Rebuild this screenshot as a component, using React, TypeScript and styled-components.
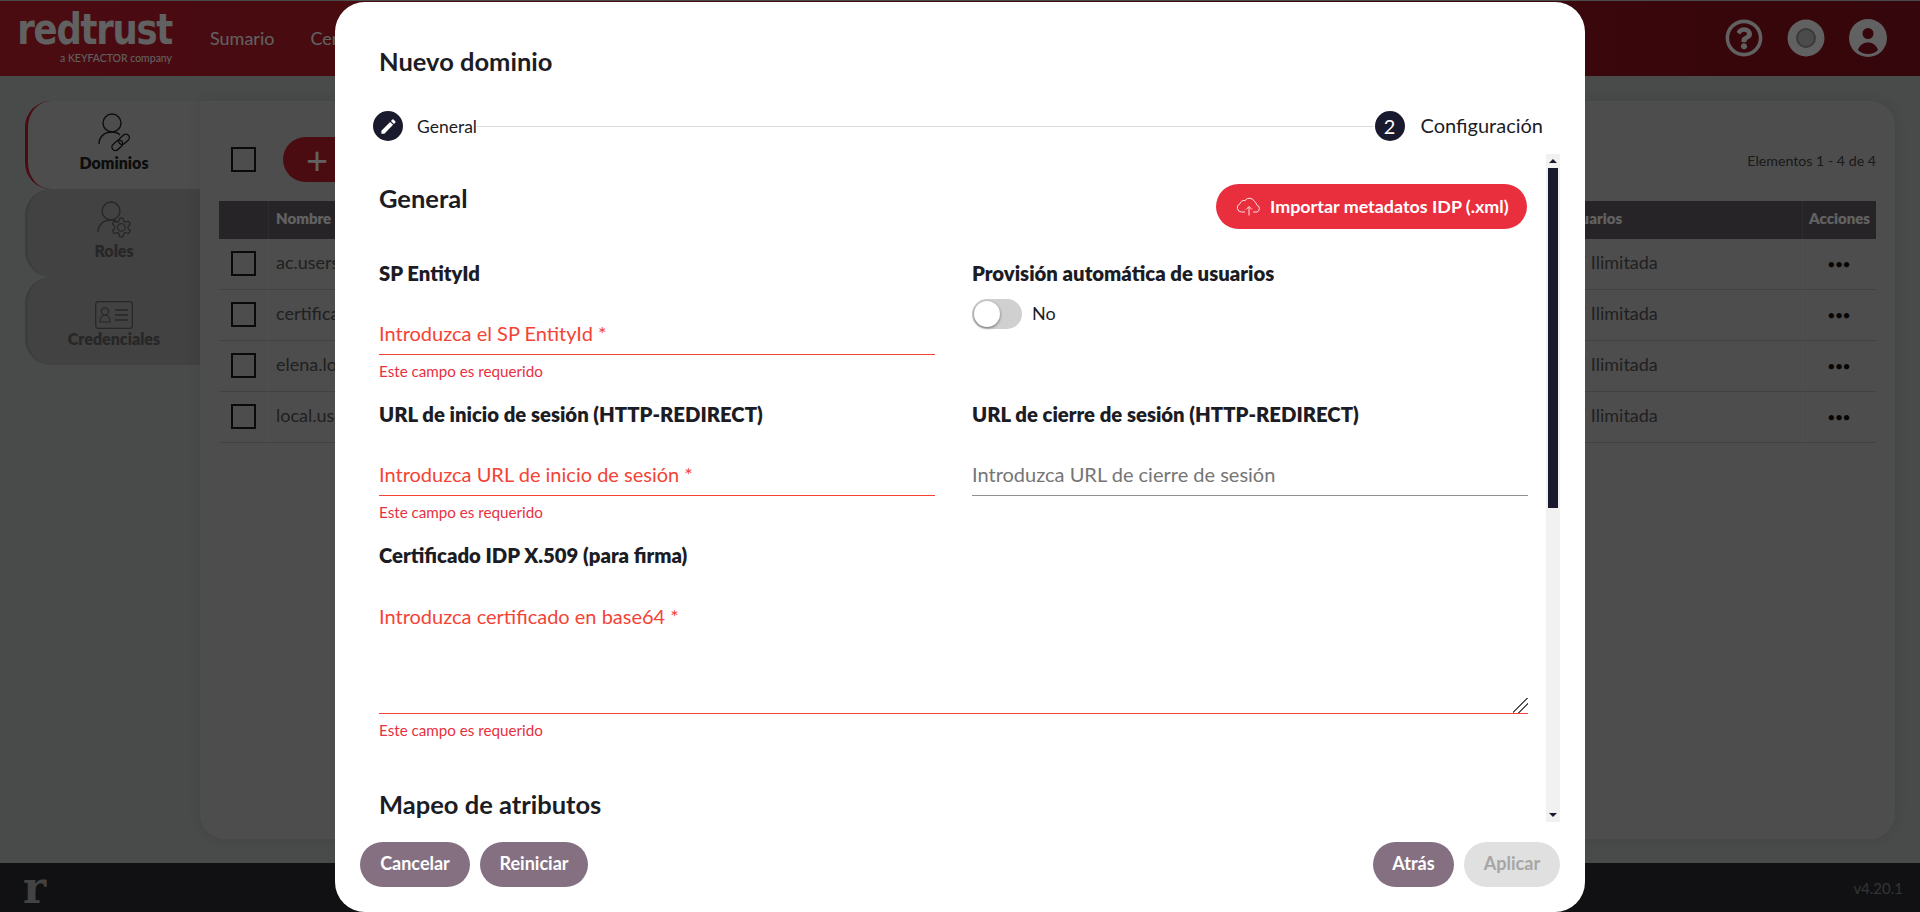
import { createGlobalStyle, styled } from "styled-components";
import { MdEdit } from "react-icons/md";
import { FaRegQuestionCircle } from "react-icons/fa";

const FONT = `Lato, "Open Sans", "Liberation Sans", sans-serif`;

const GlobalStyle = createGlobalStyle`
  html, body { margin: 0; padding: 0; height: 100%; overflow: hidden; }
  * { box-sizing: border-box; }
  body { font-family: ${FONT}; color: #1c1c24; }
`;

const Page = styled.div`
  width: 100vw;
  height: 100vh;
  padding-top: 1px;
  display: flex;
  flex-direction: column;
  background: #c0c4c4;
`;

const TopBar = styled.header`
  height: 75px;
  flex: none;
  display: flex;
  align-items: center;
  padding: 0 20px 2px;
  background: linear-gradient(90deg, #c4202f, #8c101d);
`;

const Logo = styled.div`
  width: 152px;
  display: flex;
  flex-direction: column;
  align-items: flex-end;
  color: #fff;
`;

const LogoWord = styled.span`
  font-family: "DejaVu Sans", sans-serif;
  font-weight: 700;
  font-size: 42px;
  line-height: 38px;
  letter-spacing: -1.5px;
  white-space: nowrap;
  transform: scaleX(0.845);
  transform-origin: right center;
`;

const LogoSub = styled.span`
  font-size: 10.5px;
  line-height: 14px;
  margin-top: 2px;
`;

const Nav = styled.nav`
  margin-left: 38px;
  display: flex;
  gap: 36px;
`;

const NavLink = styled.a`
  color: #fff;
  font-size: 18px;
`;

const TopIcons = styled.div`
  margin-left: auto;
  margin-right: 13px;
  display: flex;
  align-items: center;
  gap: 24px;
  color: #fff;
`;

const Content = styled.main`
  flex: 1;
  display: flex;
  padding: 25px 25px 24px;
  min-height: 0;
`;

const Side = styled.aside`
  width: 175px;
  flex: none;
  display: flex;
  flex-direction: column;
`;

const Tab = styled.div<{ $active?: boolean }>`
  height: 88px;
  display: flex;
  flex-direction: column;
  align-items: center;
  justify-content: flex-end;
  padding-bottom: 16px;
  font-size: 16px;
  font-weight: 800;
  line-height: 20px;
  border-radius: 26px 0 0 26px;
  border-left: 3px solid ${(p) => (p.$active ? "#c4202f" : "#a0a0a0")};
  background: ${(p) => (p.$active ? "#cbcbcb" : "#adadad")};
  color: ${(p) => (p.$active ? "#222" : "#666")};
`;

const Card = styled.section`
  flex: 1;
  background: #cbcbcb;
  border-radius: 0 25px 25px 25px;
  padding: 36px 19px 0;
  box-shadow: 0 0 16px rgba(0, 0, 0, 0.1);
`;

const Toolbar = styled.div`
  height: 45px;
  display: flex;
  align-items: center;
  padding-left: 12px;
  margin-bottom: 19px;
`;

const Check = styled.span`
  width: 25px;
  height: 25px;
  flex: none;
  border: 2px solid #1c1c24;
`;

const AddButton = styled.span`
  margin-left: 27px;
  width: 180px;
  height: 45px;
  border-radius: 23px;
  background: #c4202f;
  color: #fff;
  font-size: 38px;
  font-weight: 400;
  line-height: 44px;
  padding-left: 23px;
`;

const Count = styled.span`
  margin-left: auto;
  padding-top: 2px;
  font-size: 14.2px;
  color: #444;
`;

const Row = styled.div<{ $head?: boolean }>`
  display: grid;
  grid-template-columns: 49px 1fr 247px 74px;
  height: ${(p) => (p.$head ? "38px" : "51px")};
  align-items: center;
  font-size: ${(p) => (p.$head ? "15px" : "18px")};
  font-weight: ${(p) => (p.$head ? 800 : 400)};
  background: ${(p) => (p.$head ? "#675f67" : "transparent")};
  color: ${(p) => (p.$head ? "#fff" : "#555")};
  border-bottom: ${(p) => (p.$head ? "none" : "1px solid #aaa")};
`;

const Cell = styled.div<{ $center?: boolean; $head?: boolean }>`
  height: 100%;
  display: flex;
  align-items: center;
  justify-content: ${(p) => (p.$center ? "center" : "flex-start")};
  padding: 0 ${(p) => (p.$center ? "0" : "7px")} ${(p) => (p.$head || !p.$center ? "4px" : "2px")};
  border-left: 1px solid rgba(255, 255, 255, 0.12);
  &:first-child { border-left: none; }
`;

const Dots = styled.span`
  color: #111;
  font-size: 11px;
  letter-spacing: 1px;
`;

const BottomBar = styled.footer`
  height: 49px;
  flex: none;
  display: flex;
  align-items: center;
  justify-content: space-between;
  padding: 0 17px 0 23px;
  background: #2d2f35;
  color: #ddd;
`;

const LogoMark = styled.span`
  font-family: "DejaVu Serif", serif;
  font-weight: 700;
  font-size: 44px;
  line-height: 44px;
  opacity: 0.75;
`;

const Version = styled.span`
  font-size: 15px;
  opacity: 0.5;
`;

const Overlay = styled.div`
  position: fixed;
  inset: 0;
  padding-top: 2px;
  display: flex;
  justify-content: center;
  align-items: flex-start;
  background: rgba(0, 0, 0, 0.62);
`;

const Modal = styled.div`
  width: 1250px;
  height: 910px;
  display: flex;
  flex-direction: column;
  padding: 44px 25px 25px;
  background: #fff;
  border-radius: 30px;
`;

const Title = styled.h1`
  margin: 0 0 35px 19px;
  font-size: 25.5px;
  line-height: 30px;
  font-weight: 700;
`;

const Stepper = styled.div`
  height: 30px;
  flex: none;
  display: flex;
  align-items: center;
  padding: 0 17px 0 13px;
  margin-bottom: 13px;
`;

const StepDot = styled.span`
  width: 30px;
  height: 30px;
  flex: none;
  border-radius: 50%;
  display: flex;
  align-items: center;
  justify-content: center;
  background: #1a1a2e;
  color: #fff;
  font-size: 20px;
`;

const StepLabel = styled.span<{ $size: number; $gap: number }>`
  margin-left: ${(p) => p.$gap}px;
  font-size: ${(p) => p.$size}px;
  padding-bottom: ${(p) => (p.$size > 18 ? "3px" : "0")};
`;

const StepLine = styled.span`
  flex: 1;
  height: 1px;
  margin-right: 1px;
  background: #dcdcdc;
`;

const Body = styled.div`
  flex: 1;
  min-height: 0;
  display: flex;
`;

const Scroller = styled.div`
  flex: 1;
  overflow: hidden;
  padding: 30px 18px 0 19px;
`;

const SectionHead = styled.div`
  display: flex;
  justify-content: space-between;
  align-items: flex-start;
  margin-bottom: 33px;
`;

const H2 = styled.h2`
  margin: 0;
  font-size: 25.5px;
  line-height: 28px;
  font-weight: 700;
`;

const ImportButton = styled.button`
  height: 45px;
  width: 311px;
  margin-right: 1px;
  border: none;
  border-radius: 23px;
  padding: 0 0 2px 20px;
  display: flex;
  align-items: center;
  gap: 8px;
  background: #e92e3d;
  color: #fff;
  font-family: ${FONT};
  font-size: 17.9px;
  font-weight: 700;
`;

const FormGrid = styled.div`
  display: grid;
  grid-template-columns: 556px 556px;
  column-gap: 37px;
  row-gap: 23px;
`;

const Field = styled.div<{ $wide?: boolean }>`
  grid-column: ${(p) => (p.$wide ? "1 / -1" : "auto")};
`;

const Label = styled.div`
  height: 24px;
  font-size: 20.3px;
  line-height: 22px;
  font-weight: 800;
`;

const TextInput = styled.input<{ $error?: boolean }>`
  display: block;
  width: 100%;
  height: 69px;
  padding: 36px 0 10px;
  border: none;
  border-bottom: 1px solid ${(p) => (p.$error ? "#f44336" : "#8f8f8f")};
  outline: none;
  background: none;
  font-family: ${FONT};
  font-size: 20px;
  &::placeholder {
    color: ${(p) => (p.$error ? "#f44336" : "#757575")};
    opacity: 1;
  }
`;

const TextArea = styled.textarea`
  display: block;
  width: 100%;
  height: 146px;
  padding: 36px 0 0;
  border: none;
  border-bottom: 1px solid #f44336;
  outline: none;
  background: none;
  resize: vertical;
  font-family: ${FONT};
  font-size: 20px;
  line-height: 24px;
  &::placeholder {
    color: #f44336;
    opacity: 1;
  }
  &::-webkit-resizer {
    background: linear-gradient(
      135deg,
      transparent 44%,
      #555 44% 51%,
      transparent 51% 65%,
      #555 65% 72%,
      transparent 72%
    );
  }
`;

const ErrorText = styled.div`
  margin-top: 8px;
  font-size: 15.2px;
  line-height: 17px;
  color: #e8303f;
`;

const ToggleRow = styled.div`
  margin-top: 13px;
  height: 30px;
  display: flex;
  align-items: center;
  gap: 10px;
  font-size: 18px;
  line-height: 26px;
`;

const Toggle = styled.span`
  width: 50px;
  height: 30px;
  position: relative;
  border-radius: 15px;
  background: #d0d0d0;
  &::after {
    content: "";
    position: absolute;
    top: 2px;
    left: 2px;
    width: 26px;
    height: 26px;
    border-radius: 50%;
    background: #fff;
    box-shadow: 0 1px 3px rgba(0, 0, 0, 0.5);
  }
`;

const NoLabel = styled.span`
  padding-bottom: 3px;
`;

const MapHead = styled(H2)`
  margin-top: 51px;
`;

const Track = styled.div`
  width: 14px;
  flex: none;
  display: flex;
  flex-direction: column;
  align-items: center;
  background: #f1f1f1;
`;

const Arrow = styled.span<{ $down?: boolean }>`
  height: 14px;
  flex: none;
  display: flex;
  align-items: center;
  &::before {
    content: "";
    border-left: 4px solid transparent;
    border-right: 4px solid transparent;
    ${(p) => (p.$down ? "border-top: 4px solid #1a1a2e;" : "border-bottom: 4px solid #1a1a2e;")}
  }
`;

const Thumb = styled.span`
  width: 10px;
  height: 340px;
  flex: none;
  margin-bottom: auto;
  background: #1a1a2e;
`;

const Actions = styled.div`
  margin-top: 20px;
  height: 45px;
  flex: none;
  display: flex;
  gap: 10px;
`;

const Pill = styled.button<{ $width: number; $disabled?: boolean; $push?: boolean }>`
  width: ${(p) => p.$width}px;
  height: 45px;
  padding: 0 0 3px;
  border: none;
  border-radius: 23px;
  margin-left: ${(p) => (p.$push ? "auto" : "0")};
  background: ${(p) => (p.$disabled ? "#e0e0e0" : "#857082")};
  color: ${(p) => (p.$disabled ? "#a6a6a6" : "#fff")};
  font-family: ${FONT};
  font-size: 18px;
  font-weight: 700;
`;

function DomainIcon() {
  return (
    <svg width="40" height="40" viewBox="0 0 40 40" fill="none" stroke="#222" strokeWidth="1.4">
      <circle cx="18" cy="10" r="9" />
      <path d="M5 31c0-7 5-12 13-12 3 0 6 1 8 3" />
      <g transform="rotate(-42 27 29)">
        <rect x="16" y="25.5" width="12" height="7" rx="3.5" />
        <rect x="25" y="25.5" width="12" height="7" rx="3.5" />
      </g>
    </svg>
  );
}

function RoleIcon() {
  return (
    <svg width="40" height="40" viewBox="0 0 40 40" fill="none" stroke="#666" strokeWidth="1.4">
      <circle cx="17" cy="10" r="9" />
      <path d="M4 31c0-7 5-12 13-12 3 0 5 .7 7 2" />
      <g transform="translate(16 15) scale(.95)">
        <path d="M12.22 2h-.44a2 2 0 0 0-2 2v.18a2 2 0 0 1-1 1.73l-.43.25a2 2 0 0 1-2 0l-.15-.08a2 2 0 0 0-2.73.73l-.22.38a2 2 0 0 0 .73 2.73l.15.1a2 2 0 0 1 1 1.72v.51a2 2 0 0 1-1 1.74l-.15.09a2 2 0 0 0-.73 2.73l.22.38a2 2 0 0 0 2.73.73l.15-.08a2 2 0 0 1 2 0l.43.25a2 2 0 0 1 1 1.73V20a2 2 0 0 0 2 2h.44a2 2 0 0 0 2-2v-.18a2 2 0 0 1 1-1.73l.43-.25a2 2 0 0 1 2 0l.15.08a2 2 0 0 0 2.73-.73l.22-.39a2 2 0 0 0-.73-2.73l-.15-.08a2 2 0 0 1-1-1.74v-.5a2 2 0 0 1 1-1.74l.15-.09a2 2 0 0 0 .73-2.73l-.22-.38a2 2 0 0 0-2.73-.73l-.15.08a2 2 0 0 1-2 0l-.43-.25a2 2 0 0 1-1-1.73V4a2 2 0 0 0-2-2z" />
        <circle cx="12" cy="12" r="4" />
      </g>
    </svg>
  );
}

function CredentialIcon() {
  return (
    <svg width="38" height="28" viewBox="0 0 38 28" fill="none" stroke="#666" strokeWidth="1.2">
      <rect x=".7" y=".7" width="36.6" height="26.6" rx="2.5" />
      <circle cx="10" cy="10.5" r="3.6" />
      <path d="M5 21c0-4 2-6.5 5-6.5s5 2.5 5 6.5z" />
      <path d="M20 9h13M20 14h13M20 19h13" strokeWidth="1.6" />
    </svg>
  );
}

function CloudIcon() {
  return (
    <svg width="26" height="20" viewBox="0 0 26 20" fill="none" stroke="#fff" strokeWidth="1" opacity=".85">
      <path d="M9 16H5.500a4.300 4.300 0 0 1-1.500-8.300 4.500 4.500 0 0 1 5-3.200 5.500 5.500 0 0 1 9.500 1 3.500 3.500 0 0 1 2 3.300 3.800 3.800 0 0 1 .5 7.200H17" />
      <path d="M13 19.500V11M10 13.500l3-3 3 3" />
    </svg>
  );
}

function DiscIcon() {
  return (
    <svg width="38" height="38" viewBox="0 0 38 38">
      <circle cx="19" cy="19" r="18.5" fill="#fff" />
      <circle cx="19" cy="19" r="9" fill="#c4c4c4" stroke="#999" strokeWidth="2" />
    </svg>
  );
}

function AvatarIcon() {
  return (
    <svg width="38" height="38" viewBox="0 0 38 38">
      <path
        fill="#fff"
        fillRule="evenodd"
        d="M19 0a19 19 0 1 0 0 38a19 19 0 0 0 0-38zM19 9a5.500 5.500 0 1 1 0 11a5.500 5.500 0 0 1 0-11zM9 31c1.500-5 5.500-7.500 10-7.500s8.500 2.500 10 7.500c-2.500 2.500-6 4-10 4s-7.500-1.500-10-4z"
      />
    </svg>
  );
}

const DOMAINS = ["ac.users", "certificados", "elena.local", "local.users"];

export default function App() {
  return (
    <>
      <GlobalStyle />
      <Page>
        <TopBar>
          <Logo>
            <LogoWord>redtrust</LogoWord>
            <LogoSub>a KEYFACTOR company</LogoSub>
          </Logo>
          <Nav>
            <NavLink>Sumario</NavLink>
            <NavLink>Certificados</NavLink>
          </Nav>
          <TopIcons>
            <FaRegQuestionCircle size={38} />
            <DiscIcon />
            <AvatarIcon />
          </TopIcons>
        </TopBar>
        <Content>
          <Side>
            <Tab $active>
              <DomainIcon />
              Dominios
            </Tab>
            <Tab>
              <RoleIcon />
              Roles
            </Tab>
            <Tab>
              <CredentialIcon />
              Credenciales
            </Tab>
          </Side>
          <Card>
            <Toolbar>
              <Check />
              <AddButton>+</AddButton>
              <Count>Elementos 1 - 4 de 4</Count>
            </Toolbar>
            <Row $head>
              <Cell $head />
              <Cell $head>Nombre</Cell>
              <Cell $head>Usuarios</Cell>
              <Cell $head $center>
                Acciones
              </Cell>
            </Row>
            {DOMAINS.map((name) => (
              <Row key={name}>
                <Cell $center>
                  <Check />
                </Cell>
                <Cell>{name}</Cell>
                <Cell>0 / Ilimitada</Cell>
                <Cell $center>
                  <Dots>●●●</Dots>
                </Cell>
              </Row>
            ))}
          </Card>
        </Content>
        <BottomBar>
          <LogoMark>r</LogoMark>
          <Version>v4.20.1</Version>
        </BottomBar>
      </Page>
      <Overlay>
        <Modal>
          <Title>Nuevo dominio</Title>
          <Stepper>
            <StepDot>
              <MdEdit size={19} />
            </StepDot>
            <StepLabel $size={17.5} $gap={14}>
              General
            </StepLabel>
            <StepLine />
            <StepDot>2</StepDot>
            <StepLabel $size={20} $gap={16}>
              Configuración
            </StepLabel>
          </Stepper>
          <Body>
            <Scroller>
              <SectionHead>
                <H2>General</H2>
                <ImportButton>
                  <CloudIcon />
                  Importar metadatos IDP (.xml)
                </ImportButton>
              </SectionHead>
              <FormGrid>
                <Field>
                  <Label>SP EntityId</Label>
                  <TextInput $error placeholder="Introduzca el SP EntityId *" />
                  <ErrorText>Este campo es requerido</ErrorText>
                </Field>
                <Field>
                  <Label>Provisión automática de usuarios</Label>
                  <ToggleRow>
                    <Toggle />
                    <NoLabel>No</NoLabel>
                  </ToggleRow>
                </Field>
                <Field>
                  <Label>URL de inicio de sesión (HTTP-REDIRECT)</Label>
                  <TextInput $error placeholder="Introduzca URL de inicio de sesión *" />
                  <ErrorText>Este campo es requerido</ErrorText>
                </Field>
                <Field>
                  <Label>URL de cierre de sesión (HTTP-REDIRECT)</Label>
                  <TextInput placeholder="Introduzca URL de cierre de sesión" />
                </Field>
                <Field $wide>
                  <Label>Certificado IDP X.509 (para firma)</Label>
                  <TextArea placeholder="Introduzca certificado en base64 *" />
                  <ErrorText>Este campo es requerido</ErrorText>
                </Field>
              </FormGrid>
              <MapHead>Mapeo de atributos</MapHead>
            </Scroller>
            <Track>
              <Arrow />
              <Thumb />
              <Arrow $down />
            </Track>
          </Body>
          <Actions>
            <Pill $width={110}>Cancelar</Pill>
            <Pill $width={108}>Reiniciar</Pill>
            <Pill $width={81} $push>
              Atrás
            </Pill>
            <Pill $width={96} $disabled>
              Aplicar
            </Pill>
          </Actions>
        </Modal>
      </Overlay>
    </>
  );
}
